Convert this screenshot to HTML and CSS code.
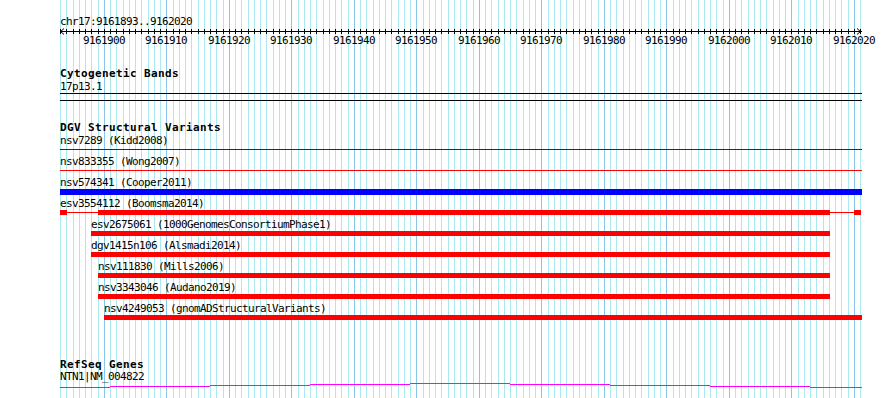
FILE: index.html
```html
<!DOCTYPE html>
<html lang="en">
<head>
<meta charset="utf-8">
<title>chr17:9161893..9162020</title>
<link rel="stylesheet" href="styles.css">
</head>
<body>
<div class="view">
  <div class="locus">chr17:9161893..9162020</div>
  <svg class="ruler" width="802" height="20" viewBox="0 0 802 20">
    <defs>
      <pattern id="ticks" x="0" y="0" width="25" height="20" patternUnits="userSpaceOnUse">
        <rect x="0" y="2" width="1" height="5"/>
        <rect x="6" y="2" width="1" height="5"/>
        <rect x="13" y="2" width="1" height="5"/>
        <rect x="19" y="2" width="1" height="5"/>
      </pattern>
    </defs>
    <rect x="0" y="4" width="802" height="1"/>
    <rect x="0" y="0" width="802" height="20" fill="url(#ticks)"/>
    <path class="arrow" d="M4 1.5L0.5 4.5L4 7.5M797 1.5L800.5 4.5L797 7.5"/>
    <g class="tick-labels">
      <text x="44" y="17">9161900</text>
      <text x="106" y="17">9161910</text>
      <text x="169" y="17">9161920</text>
      <text x="231" y="17">9161930</text>
      <text x="294" y="17">9161940</text>
      <text x="356" y="17">9161950</text>
      <text x="419" y="17">9161960</text>
      <text x="481" y="17">9161970</text>
      <text x="544" y="17">9161980</text>
      <text x="606" y="17">9161990</text>
      <text x="669" y="17">9162000</text>
      <text x="731" y="17">9162010</text>
      <text x="794" y="17">9162020</text>
    </g>
  </svg>

  <section class="track track-cyto">
    <h2 class="track-title">Cytogenetic Bands</h2>
    <div class="label">17p13.1</div>
    <div class="band"></div>
  </section>

  <section class="track track-dgv">
    <h2 class="track-title">DGV Structural Variants</h2>
    <div class="rows">
      <div class="feature-row">
        <div class="label">nsv7289 (Kidd2008)</div>
        <div class="glyphs"><div class="line indigo"></div></div>
      </div>
      <div class="feature-row">
        <div class="label">nsv833355 (Wong2007)</div>
        <div class="glyphs"><div class="line red"></div></div>
      </div>
      <div class="feature-row">
        <div class="label">nsv574341 (Cooper2011)</div>
        <div class="glyphs"><div class="bar blue wide"></div></div>
      </div>
      <div class="feature-row">
        <div class="label">esv3554112 (Boomsma2014)</div>
        <div class="glyphs">
          <div class="composite">
            <div class="seg block" style="width:7px"></div>
            <div class="seg thin" style="width:31px"></div>
            <div class="seg block" style="width:732px"></div>
            <div class="seg thin" style="width:24px"></div>
            <div class="seg block" style="width:7px"></div>
          </div>
        </div>
      </div>
      <div class="feature-row">
        <div class="label" style="margin-left:31px">esv2675061 (1000GenomesConsortiumPhase1)</div>
        <div class="glyphs"><div class="bar red" style="margin-left:31px;width:739px"></div></div>
      </div>
      <div class="feature-row">
        <div class="label" style="margin-left:31px">dgv1415n106 (Alsmadi2014)</div>
        <div class="glyphs"><div class="bar red" style="margin-left:31px;width:739px"></div></div>
      </div>
      <div class="feature-row">
        <div class="label" style="margin-left:38px">nsv111830 (Mills2006)</div>
        <div class="glyphs"><div class="bar red" style="margin-left:38px;width:732px"></div></div>
      </div>
      <div class="feature-row">
        <div class="label" style="margin-left:38px">nsv3343046 (Audano2019)</div>
        <div class="glyphs"><div class="bar red" style="margin-left:38px;width:732px"></div></div>
      </div>
      <div class="feature-row">
        <div class="label" style="margin-left:44px">nsv4249053 (gnomADStructuralVariants)</div>
        <div class="glyphs"><div class="bar red" style="margin-left:44px;width:758px"></div></div>
      </div>
    </div>
  </section>

  <section class="track track-genes">
    <h2 class="track-title">RefSeq Genes</h2>
    <div class="label">NTN1|NM_004822</div>
    <svg class="gene" width="802" height="7" viewBox="0 0 802 7">
      <rect x="0" y="5" width="50" height="1"/>
      <rect x="50" y="4" width="100" height="1"/>
      <rect x="150" y="3" width="100" height="1"/>
      <rect x="250" y="2" width="100" height="1"/>
      <rect x="350" y="1" width="100" height="1"/>
      <rect x="450" y="2" width="100" height="1"/>
      <rect x="550" y="3" width="100" height="1"/>
      <rect x="650" y="4" width="100" height="1"/>
      <rect x="750" y="5" width="52" height="1"/>
    </svg>
  </section>
</div>
</body>
</html>
```

FILE: styles.css
```css
* {
  box-sizing: border-box;
  margin: 0;
  padding: 0;
}

html, body {
  height: 398px;
  overflow: hidden;
}

body {
  margin: 0;
  background: #ffffff;
  color: #000000;
  font-family: "DejaVu Sans Mono", "Liberation Mono", monospace;
  font-size: 11px;
  line-height: 11px;
  letter-spacing: -0.62px;
}

.view {
  margin-left: 60px;
  width: 802px;
  height: 398px;
  padding-top: 16px;
  background-color: #ffffff;
  background-image:
    linear-gradient(to right,
      transparent 44px, #88c6ec 44px, #88c6ec 45px,
      transparent 45px, transparent 106px,
      #88c6ec 106px, #88c6ec 107px, transparent 107px),
    linear-gradient(to right,
      #a9e9ef 0, #a9e9ef 1px, transparent 1px, transparent 6px,
      #a9e9ef 6px, #a9e9ef 7px, transparent 7px, transparent 13px,
      #a9e9ef 13px, #a9e9ef 14px, transparent 14px, transparent 19px,
      #a9e9ef 19px, #a9e9ef 20px, transparent 20px);
  background-size: 125px 100%, 25px 100%;
  background-repeat: repeat-x, repeat-x;
}

.locus {
  height: 11px;
  white-space: nowrap;
}

.ruler {
  display: block;
  overflow: visible;
  shape-rendering: crispEdges;
}

.ruler .arrow {
  fill: none;
  stroke: #000000;
  stroke-width: 1;
  shape-rendering: auto;
}

.tick-labels text {
  font-family: "DejaVu Sans Mono", "Liberation Mono", monospace;
  font-size: 11px;
  letter-spacing: -0.62px;
  text-anchor: middle;
  fill: #000000;
}

.track-title {
  height: 11px;
  font-size: 11px;
  line-height: 11px;
  font-weight: bold;
  letter-spacing: 0.38px;
  white-space: nowrap;
}

.label {
  height: 11px;
  white-space: nowrap;
}

.track-cyto {
  margin-top: 21px;
}

.track-cyto .label {
  margin-top: 2px;
}

.band {
  margin-top: 1px;
  height: 8px;
  border-top: 1px solid #000000;
  border-bottom: 1px solid #000000;
}

.track-dgv {
  margin-top: 21px;
}

.rows {
  margin-top: 2px;
  display: flex;
  flex-direction: column;
}

.feature-row {
  height: 21px;
  display: flex;
  flex-direction: column;
}

.glyphs {
  height: 10px;
}

.line {
  height: 1px;
  margin-top: 3px;
  width: 802px;
}

.bar {
  height: 5px;
  margin-top: 1px;
}

.bar.wide {
  width: 802px;
  height: 6px;
}

.indigo { background: #48088a; }
.red { background: #ff0000; }
.blue { background: #0000ff; }

.composite {
  display: flex;
  align-items: center;
  height: 5px;
  margin-top: 1px;
}

.seg.block {
  height: 5px;
  background: #ff0000;
}

.seg.thin {
  height: 1px;
  background: #ff0000;
}

.track-genes {
  margin-top: 35px;
}

.track-genes .label {
  margin-top: 1px;
}

.gene {
  display: block;
  fill: #ff00ff;
  shape-rendering: crispEdges;
}
```
